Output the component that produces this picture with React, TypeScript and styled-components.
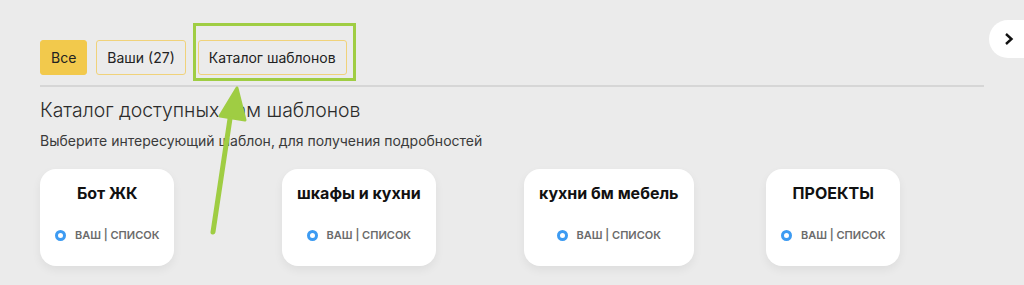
import React from "react";
import styled, { createGlobalStyle } from "styled-components";

const GlobalStyle = createGlobalStyle`
  html, body {
    margin: 0;
    background: #ebebeb;
  }
  body {
    font-family: Inter, "Noto Sans", sans-serif;
    color: #222;
  }
`;

type Template = { title: string };

const templates: Template[] = [
  { title: "Бот ЖК" },
  { title: "шкафы и кухни" },
  { title: "кухни бм мебель" },
  { title: "ПРОЕКТЫ" },
];

const Page = styled.div`
  position: relative;
  height: 285px;
  overflow: hidden;
  padding: 40px 40px 0;
  box-sizing: border-box;
`;

const Tabs = styled.div`
  display: flex;
  gap: 9px;
  padding-bottom: 10px;
  border-bottom: 2px solid #d6d6d6;
`;

const Highlight = styled.div`
  margin: -17px 0 -6px -2px;
  padding: 14px 6px 3px 2px;
  border: 3px solid #9fcd43;
  display: flex;
`;

const Tab = styled.button<{ $active?: boolean }>`
  height: 35px;
  padding: 0 10px;
  border-radius: 3px;
  font: 400 14px Inter, "Noto Sans", sans-serif;
  color: #222;
  cursor: pointer;
  border: 1px solid ${({ $active }) => ($active ? "#f2c94c" : "#f0d27a")};
  background: ${({ $active }) => ($active ? "#f2c94c" : "transparent")};
`;

const Heading = styled.h2`
  margin: 10px 0 0;
  font-size: 19.4px;
  font-weight: 300;
  line-height: 26px;
  color: #2b2b2b;
`;

const Subtitle = styled.p`
  margin: 8px 0 0;
  font-size: 14px;
  line-height: 20px;
  color: #3a3a3a;
`;

const Grid = styled.div`
  margin-top: 18px;
  display: grid;
  grid-template-columns: repeat(4, 242px);
  align-items: start;
`;

const Card = styled.div`
  justify-self: start;
  height: 97px;
  box-sizing: border-box;
  padding: 13px 15px 0;
  background: #fff;
  border-radius: 16px;
  box-shadow: 0 4px 10px rgba(0, 0, 0, 0.06);
  display: flex;
  flex-direction: column;
  align-items: center;
`;

const CardTitle = styled.div`
  font-size: 16px;
  font-weight: 700;
  line-height: 22px;
  color: #111;
  white-space: nowrap;
`;

const Status = styled.div`
  margin-top: 24px;
  display: flex;
  align-items: center;
  gap: 9px;
  font-size: 11px;
  font-weight: 600;
  color: #6b6b6b;
  text-transform: uppercase;
  white-space: nowrap;
`;

const Ring = styled.span`
  width: 11px;
  height: 11px;
  box-sizing: border-box;
  border: 3px solid #3d9bf2;
  border-radius: 50%;
`;

const NextButton = styled.button`
  position: absolute;
  top: 20px;
  right: -20px;
  width: 55px;
  height: 38px;
  border: none;
  border-radius: 19px;
  background: #fff;
  padding: 0 0 0 14px;
  display: flex;
  align-items: center;
  cursor: pointer;
`;

const Arrow = styled.svg`
  position: absolute;
  left: 0;
  top: 0;
  pointer-events: none;
`;

export default function App() {
  return (
    <>
      <GlobalStyle />
      <Page>
        <Tabs>
          <Tab $active>Все</Tab>
          <Tab>Ваши (27)</Tab>
          <Highlight>
            <Tab>Каталог шаблонов</Tab>
          </Highlight>
        </Tabs>
        <Heading>Каталог доступных вам шаблонов</Heading>
        <Subtitle>Выберите интересующий шаблон, для получения подробностей</Subtitle>
        <Grid>
          {templates.map((t) => (
            <Card key={t.title}>
              <CardTitle>{t.title}</CardTitle>
              <Status>
                <Ring />
                <span>ваш | список</span>
              </Status>
            </Card>
          ))}
        </Grid>
        <NextButton aria-label="Далее">
          <svg width="12" height="14" viewBox="0 0 12 14">
            <path d="M3 2l5.5 5L3 12" fill="none" stroke="#111" strokeWidth="2.4" />
          </svg>
        </NextButton>
        <Arrow width="1024" height="285" viewBox="0 0 1024 285">
          <path d="M213 232L231 112" stroke="#9fcd43" strokeWidth="5" strokeLinecap="round" />
          <path d="M237 88L220 116L245 120Z" fill="#9fcd43" stroke="#9fcd43" strokeWidth="3" strokeLinejoin="round" />
        </Arrow>
      </Page>
    </>
  );
}
